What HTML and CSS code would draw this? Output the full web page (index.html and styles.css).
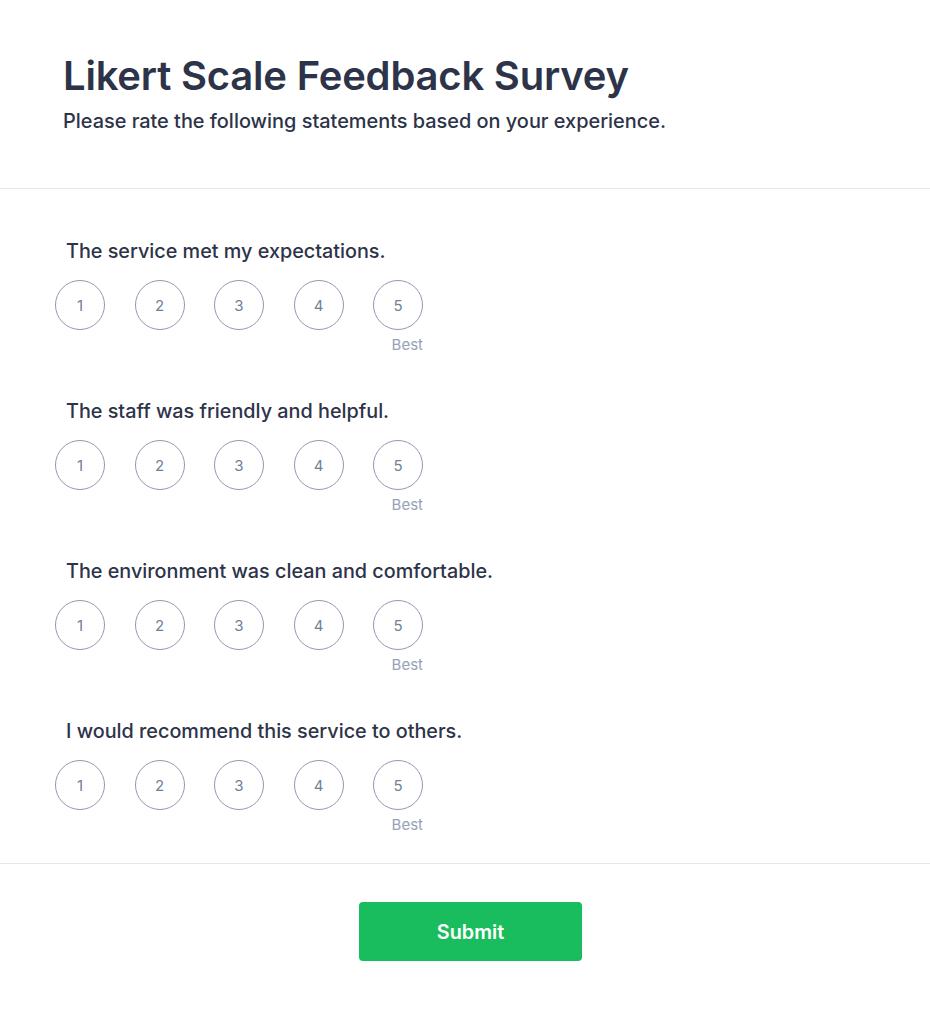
FILE: index.html
```html
<!DOCTYPE html>
<html lang="en">
<head>
<meta charset="utf-8">
<title>Likert Scale Feedback Survey</title>
<link rel="stylesheet" href="styles.css">
</head>
<body>
<div class="survey">
  <header class="survey-header">
    <h1 class="title">Likert Scale Feedback Survey</h1>
    <p class="subtitle">Please rate the following statements based on your experience.</p>
  </header>
  <section class="questions">
    <div class="question">
      <div class="question-text">The service met my expectations.</div>
      <div class="scale">
        <div class="option"><span class="circle">1</span></div>
        <div class="option"><span class="circle">2</span></div>
        <div class="option"><span class="circle">3</span></div>
        <div class="option"><span class="circle">4</span></div>
        <div class="option"><span class="circle">5</span><span class="hint">Best</span></div>
      </div>
    </div>
    <div class="question">
      <div class="question-text">The staff was friendly and helpful.</div>
      <div class="scale">
        <div class="option"><span class="circle">1</span></div>
        <div class="option"><span class="circle">2</span></div>
        <div class="option"><span class="circle">3</span></div>
        <div class="option"><span class="circle">4</span></div>
        <div class="option"><span class="circle">5</span><span class="hint">Best</span></div>
      </div>
    </div>
    <div class="question">
      <div class="question-text">The environment was clean and comfortable.</div>
      <div class="scale">
        <div class="option"><span class="circle">1</span></div>
        <div class="option"><span class="circle">2</span></div>
        <div class="option"><span class="circle">3</span></div>
        <div class="option"><span class="circle">4</span></div>
        <div class="option"><span class="circle">5</span><span class="hint">Best</span></div>
      </div>
    </div>
    <div class="question">
      <div class="question-text">I would recommend this service to others.</div>
      <div class="scale">
        <div class="option"><span class="circle">1</span></div>
        <div class="option"><span class="circle">2</span></div>
        <div class="option"><span class="circle">3</span></div>
        <div class="option"><span class="circle">4</span></div>
        <div class="option"><span class="circle">5</span><span class="hint">Best</span></div>
      </div>
    </div>
  </section>
  <footer class="survey-footer">
    <button class="submit" type="button">Submit</button>
  </footer>
</div>
</body>
</html>
```

FILE: styles.css
```css
* { box-sizing: border-box; }

html, body {
  margin: 0;
  padding: 0;
  background: #ffffff;
}

body {
  font-family: Inter, "Noto Sans", "Liberation Sans", sans-serif;
  color: #2d3748;
}

.survey-header {
  padding: 52px 63px 0;
  height: 189px;
  border-bottom: 1px solid #e2e8f0;
}

.title {
  margin: 0;
  font-size: 40px;
  font-weight: 600;
  line-height: 48px;
  color: #2d3348;
  letter-spacing: -0.2px;
}

.subtitle {
  margin: 9px 0 0;
  font-size: 19.9px;
  font-weight: 500;
  line-height: 24px;
  color: #2d3348;
}

.questions {
  padding: 50px 0 0 55px;
  height: 675px;
  border-bottom: 1px solid #e2e8f0;
}

.question {
  height: 160px;
}

.question-text {
  padding-left: 11px;
  font-size: 19.8px;
  font-weight: 500;
  line-height: 24px;
  color: #2d3348;
}

.scale {
  display: flex;
  gap: 29.5px;
  margin-top: 17px;
}

.option {
  display: flex;
  flex-direction: column;
  align-items: flex-end;
  width: 50px;
}

.circle {
  display: flex;
  align-items: center;
  justify-content: center;
  width: 50px;
  height: 50px;
  border: 1px solid #8d9ab2;
  border-radius: 50%;
  font-size: 15px;
  font-weight: 400;
  color: #718096;
}

.hint {
  margin-top: 6px;
  font-size: 15px;
  line-height: 18px;
  color: #94a3b8;
  white-space: nowrap;
}

.survey-footer {
  display: flex;
  justify-content: center;
  padding: 38px 0 50px 11px;
}

.submit {
  width: 223px;
  height: 59px;
  border: none;
  border-radius: 4px;
  background: #1abd5d;
  color: #ffffff;
  font-family: Inter, "Noto Sans", "Liberation Sans", sans-serif;
  font-size: 19.8px;
  font-weight: 600;
}
```
